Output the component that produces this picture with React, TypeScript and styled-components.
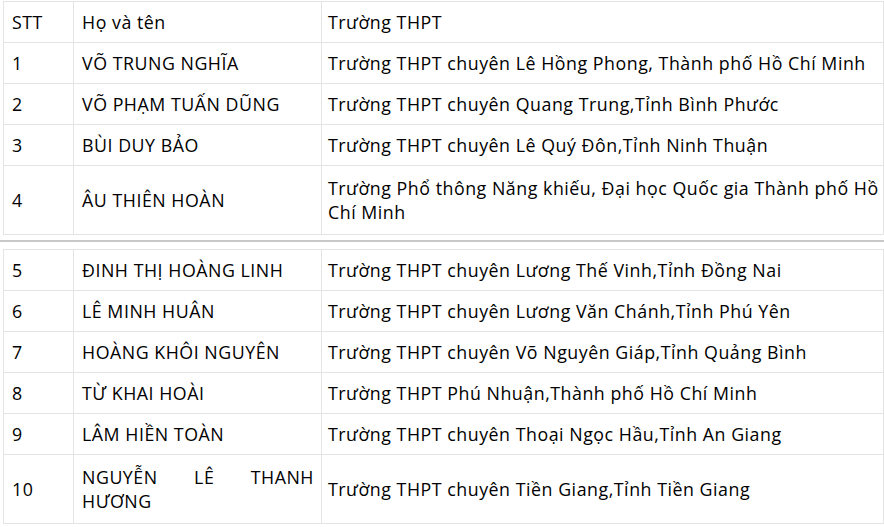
import React from "react";
import styled, { createGlobalStyle } from "styled-components";

const Global = createGlobalStyle`
  html, body { margin: 0; padding: 0; background: #ffffff; }
  body { font-family: "Open Sans", "Noto Sans", sans-serif; color: #000; }
  * { box-sizing: border-box; }
`;

const Page = styled.div`
  width: 884px;
  padding-top: 1px;
  display: flex;
  flex-direction: column;
`;

const Table = styled.div`
  margin-left: 3px;
  width: 881px;
  display: grid;
  grid-template-columns: 70px 248px 562px;
  border-right: 1px solid #e4e4e4;
  border-bottom: 1px solid #e4e4e4;
`;

const Cell = styled.div<{ $tall?: boolean; $pl: number; $pr: number; $justify?: boolean }>`
  border-left: 1px solid #e4e4e4;
  border-top: 1px solid #e4e4e4;
  height: ${(p) => (p.$tall ? 69 : 41)}px;
  padding: 0 ${(p) => p.$pr}px 0 ${(p) => p.$pl}px;
  display: flex;
  align-items: center;
  font-size: 17.8px;
  font-weight: 500;
  letter-spacing: 0.53px;
  line-height: 24px;
  text-align: ${(p) => (p.$justify ? "justify" : "left")};
  text-align-last: left;
`;

const CellText = styled.div`
  width: 100%;
`;

const PageBreak = styled.div`
  height: 2px;
  background: #c8c8c8;
  margin: 5px 0 7px 0;
  width: 884px;
`;

type Row = [string, string, string, boolean?];

const first: Row[] = [
  ["STT", "Họ và tên", "Trường THPT"],
  ["1", "VÕ TRUNG NGHĨA", "Trường THPT chuyên Lê Hồng Phong, Thành phố Hồ Chí Minh"],
  ["2", "VÕ PHẠM TUẤN DŨNG", "Trường THPT chuyên Quang Trung,Tỉnh Bình Phước"],
  ["3", "BÙI DUY BẢO", "Trường THPT chuyên Lê Quý Đôn,Tỉnh Ninh Thuận"],
  ["4", "ÂU THIÊN HOÀN", "Trường Phổ thông Năng khiếu, Đại học Quốc gia Thành phố Hồ Chí Minh", true],
];

const second: Row[] = [
  ["5", "ĐINH THỊ HOÀNG LINH", "Trường THPT chuyên Lương Thế Vinh,Tỉnh Đồng Nai"],
  ["6", "LÊ MINH HUÂN", "Trường THPT chuyên Lương Văn Chánh,Tỉnh Phú Yên"],
  ["7", "HOÀNG KHÔI NGUYÊN", "Trường THPT chuyên Võ Nguyên Giáp,Tỉnh Quảng Bình"],
  ["8", "TỪ KHAI HOÀI", "Trường THPT Phú Nhuận,Thành phố Hồ Chí Minh"],
  ["9", "LÂM HIỀN TOÀN", "Trường THPT chuyên Thoại Ngọc Hầu,Tỉnh An Giang"],
  ["10", "NGUYỄN LÊ THANH HƯƠNG", "Trường THPT chuyên Tiền Giang,Tỉnh Tiền Giang", true],
];

function Rows({ rows }: { rows: Row[] }) {
  return (
    <Table>
      {rows.map(([a, b, c, tall]) => (
        <React.Fragment key={a}>
          <Cell $tall={tall} $pl={8} $pr={6}>
            <CellText>{a}</CellText>
          </Cell>
          <Cell $tall={tall} $pl={8} $pr={7} $justify>
            <CellText>{b}</CellText>
          </Cell>
          <Cell $tall={tall} $pl={6} $pr={1}>
            <CellText>{c}</CellText>
          </Cell>
        </React.Fragment>
      ))}
    </Table>
  );
}

export default function App() {
  return (
    <Page>
      <Global />
      <Rows rows={first} />
      <PageBreak />
      <Rows rows={second} />
    </Page>
  );
}
